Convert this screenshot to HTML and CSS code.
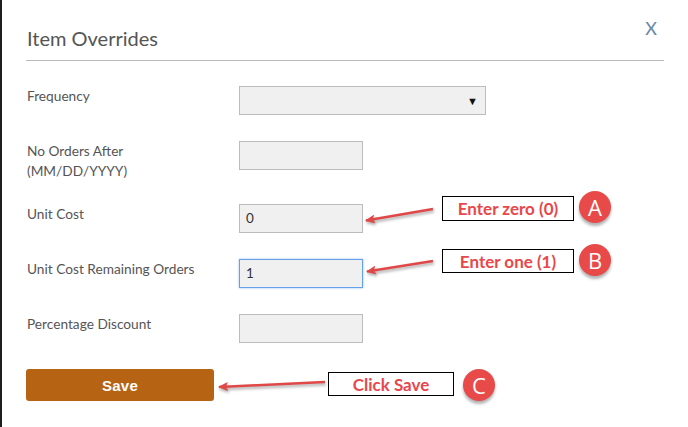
FILE: index.html
```html
<!DOCTYPE html>
<html lang="en">
<head>
<meta charset="utf-8">
<title>Item Overrides</title>
<link rel="stylesheet" href="styles.css">
</head>
<body>
<div class="modal">
  <div class="modal-header">
    <h1 class="modal-title">Item Overrides</h1>
    <span class="modal-close">X</span>
  </div>
  <form class="form">
    <div class="row">
      <label class="label">Frequency</label>
      <div class="select"><span class="caret">&#9660;</span></div>
    </div>
    <div class="row row-tall">
      <label class="label">No Orders After<br>(MM/DD/YYYY)</label>
      <div class="input"></div>
    </div>
    <div class="row">
      <label class="label">Unit Cost</label>
      <div class="input">0</div>
    </div>
    <div class="row">
      <label class="label">Unit Cost Remaining Orders</label>
      <div class="input input-focus">1</div>
    </div>
    <div class="row">
      <label class="label">Percentage Discount</label>
      <div class="input"></div>
    </div>
    <button type="button" class="save">Save</button>
  </form>

  <div class="notes">
    <svg class="arrows" width="688" height="427" viewBox="0 0 688 427">
      <defs>
        <marker id="head" markerUnits="userSpaceOnUse" markerWidth="10" markerHeight="9" refX="9" refY="4.5" orient="auto">
          <path d="M0,0 L10,4.5 L0,9 L2,4.5 z" fill="#e04848"/>
        </marker>
      </defs>
      <line x1="433" y1="209" x2="366" y2="220.5" stroke="#e04848" stroke-width="2.6" marker-end="url(#head)"/>
      <line x1="433" y1="261" x2="367" y2="271.5" stroke="#e04848" stroke-width="2.6" marker-end="url(#head)"/>
      <line x1="325" y1="382" x2="219" y2="387" stroke="#e04848" stroke-width="2.6" marker-end="url(#head)"/>
    </svg>
    <div class="callout callout-a">Enter zero (0)</div>
    <div class="callout callout-b">Enter one (1)</div>
    <div class="callout callout-c">Click Save</div>
    <div class="badge badge-a">A</div>
    <div class="badge badge-b">B</div>
    <div class="badge badge-c">C</div>
  </div>
</div>
</body>
</html>
```
FILE: styles.css
```css
* { box-sizing: border-box; }
html, body { margin: 0; padding: 0; background: #fff; }
body { font-family: Lato, "Open Sans", sans-serif; color: #555; }

.modal {
  position: relative;
  width: 688px;
  height: 427px;
  border-left: 2px solid #1e1e1e;
  padding: 0 24px 0 24px;
  overflow: hidden;
}

.modal-header {
  display: flex;
  justify-content: space-between;
  align-items: flex-start;
  padding-top: 17px;
  padding-bottom: 11px;
  border-bottom: 1px solid #bcbcbc;
}
.modal-title {
  margin: 10px 0 0 1px;
  font-size: 20px;
  line-height: 22px;
  font-weight: 400;
  color: #555;
}
.modal-close {
  margin-right: 7px;
  font-size: 18px;
  line-height: 22px;
  color: #6786a8;
}

.form { margin-top: 25px; }
.row {
  display: flex;
  align-items: flex-start;
  margin-bottom: 26px;
}
.row-tall { margin-bottom: 23px; }
.label {
  width: 213px;
  padding-left: 1px;
  font-size: 13.7px;
  line-height: 20px;
  color: #555;
}
.select {
  position: relative;
  width: 247px;
  height: 29px;
  background: #f0f0f0;
  border: 1px solid #bcbcbc;
}
.caret {
  position: absolute;
  right: 7px;
  top: 8px;
  font-size: 11px;
  line-height: 12px;
  color: #111;
}
.input {
  width: 124px;
  height: 29px;
  background: #f0f0f0;
  border: 1px solid #bcbcbc;
  padding: 0 6px;
  font-size: 13.5px;
  line-height: 27px;
  color: #333;
}
.input-focus {
  border-color: #66a0e8;
  box-shadow: 0 0 2px rgba(102, 160, 230, 0.7);
}

.save {
  display: block;
  width: 188px;
  height: 32px;
  margin: 0;
  border: 0;
  border-radius: 3px;
  background: #b66414;
  color: #fff;
  font-family: "Liberation Sans", Arial, sans-serif;
  font-weight: 700;
  font-size: 15px;
  letter-spacing: 0.3px;
}

.notes {
  position: absolute;
  left: -2px;
  top: 0;
  width: 688px;
  height: 427px;
  pointer-events: none;
}
.arrows {
  position: absolute;
  left: 0;
  top: 0;
  filter: drop-shadow(1px 2px 1.5px rgba(0, 0, 0, 0.35));
}
.callout {
  position: absolute;
  display: flex;
  align-items: center;
  justify-content: center;
  background: #fff;
  border: 1px solid #000;
  font-family: Lato, sans-serif;
  font-weight: 700;
  font-size: 17px;
  color: #e8474b;
}
.callout-a { left: 442px; top: 196px; width: 132px; height: 25px; }
.callout-b { left: 442px; top: 249px; width: 132px; height: 24px; }
.callout-c { left: 328px; top: 372px; width: 126px; height: 24px; }

.badge {
  position: absolute;
  width: 32px;
  height: 32px;
  border-radius: 50%;
  background: #e84a4a;
  color: #fff;
  display: flex;
  align-items: center;
  justify-content: center;
  font-family: "Open Sans", sans-serif;
  font-size: 22px;
  line-height: 1;
  box-shadow: 0 3px 3px rgba(0, 0, 0, 0.3);
}
.badge-a { left: 579px; top: 191px; }
.badge-b { left: 579px; top: 244px; }
.badge-c { left: 463px; top: 369px; }
```
